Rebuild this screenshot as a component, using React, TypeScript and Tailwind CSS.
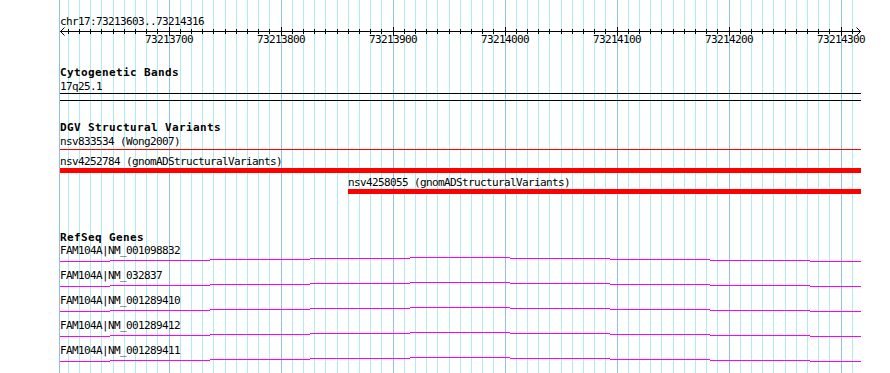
import React from "react";

const MINOR = "#afeeee";
const MAJOR = "#90c0e8";

const ticks = Array.from({ length: 71 }, (_, i) => {
  const k = i - 9;
  return { k, x: Math.floor(169 + k * 11.2 + 1e-6), major: k % 10 === 0 };
});

const labels = ticks.filter((t) => t.major).map((t) => ({ x: t.x, text: String(73213700 + t.k * 10) }));

const segs: [number, number, number][] = [
  [0, 50, 4],
  [50, 150, 3],
  [150, 250, 2],
  [250, 350, 1],
  [350, 450, 0],
  [450, 550, 1],
  [550, 650, 2],
  [650, 750, 3],
  [750, 801, 4],
];

const genes = [
  "FAM104A|NM_001098832",
  "FAM104A|NM_032837",
  "FAM104A|NM_001289410",
  "FAM104A|NM_001289412",
  "FAM104A|NM_001289411",
];

const txt = "h-[13px] text-[11px] leading-[13px] tracking-[-0.622px] whitespace-nowrap";
const bold = "h-[12px] text-[11px] leading-[12px] font-bold tracking-[0.378px] whitespace-nowrap";

function Grid() {
  return (
    <svg className="absolute left-0 top-0" width={890} height={373} shapeRendering="crispEdges">
      <rect x={59} y={0} width={1} height={373} fill={MAJOR} />
      {ticks.map((t) => (
        <rect key={t.k} x={t.x} y={0} width={1} height={373} fill={t.major ? MAJOR : MINOR} />
      ))}
    </svg>
  );
}

function Axis() {
  return (
    <svg className="absolute left-0 top-[26px]" width={801} height={11} shapeRendering="crispEdges">
      <rect x={0} y={5} width={801} height={1} fill="#000" />
      {ticks.map((t) =>
        t.major ? (
          <rect key={t.k} x={t.x - 60} y={1} width={1} height={9} fill="#000" />
        ) : (
          <rect key={t.k} x={t.x - 60} y={3} width={1} height={5} fill="#000" />
        )
      )}
      <path d="M4.5 1.5 L0.5 5.5 L4.5 9.5" stroke="#000" strokeWidth={1} fill="none" shapeRendering="auto" />
      <path d="M796.5 1.5 L800.5 5.5 L796.5 9.5" stroke="#000" strokeWidth={1} fill="none" shapeRendering="auto" />
    </svg>
  );
}

function GeneLine() {
  return (
    <svg width={801} height={5} shapeRendering="crispEdges" className="block">
      {segs.map(([a, b, y], i) => (
        <rect key={i} x={a} y={y} width={b - a} height={1} fill="#ff00ff" />
      ))}
    </svg>
  );
}

export default function App() {
  return (
    <div className="relative w-[890px] h-[373px] overflow-hidden bg-white text-black font-['DejaVu_Sans_Mono',monospace]">
      <Grid />
      <div className="relative ml-[60px] w-[801px] flex flex-col">
        <div className="relative h-[56px]">
          <div className={`${txt} mt-[15px]`}>chr17:73213603..73214316</div>
          <Axis />
          {labels.map((l) => (
            <div key={l.text} className={`${txt} absolute top-[33px]`} style={{ left: l.x - 60 - 24 }}>
              {l.text}
            </div>
          ))}
        </div>

        <div className={`${bold} mt-[11px]`}>Cytogenetic Bands</div>
        <div className={`${txt} mt-px`}>17q25.1</div>
        <div className="h-[8px] border-y border-black" />

        <div className={`${bold} mt-[21px]`}>DGV Structural Variants</div>
        <div className={`${txt} mt-px`}>nsv833534 (Wong2007)</div>
        <div className="mt-px h-px bg-[#ff0000]" />
        <div className={`${txt} mt-[5px]`}>nsv4252784 (gnomADStructuralVariants)</div>
        <div className="h-[5px] bg-[#ff0000]" />
        <div className={`${txt} mt-[3px] ml-[288px]`}>nsv4258055 (gnomADStructuralVariants)</div>
        <div className="ml-[288px] h-[5px] bg-[#ff0000]" />

        <div className={`${bold} mt-[38px]`}>RefSeq Genes</div>
        {genes.map((g) => (
          <div key={g} className="flex h-[25px] flex-col">
            <div className={txt}>{g}</div>
            <GeneLine />
          </div>
        ))}
      </div>
    </div>
  );
}
